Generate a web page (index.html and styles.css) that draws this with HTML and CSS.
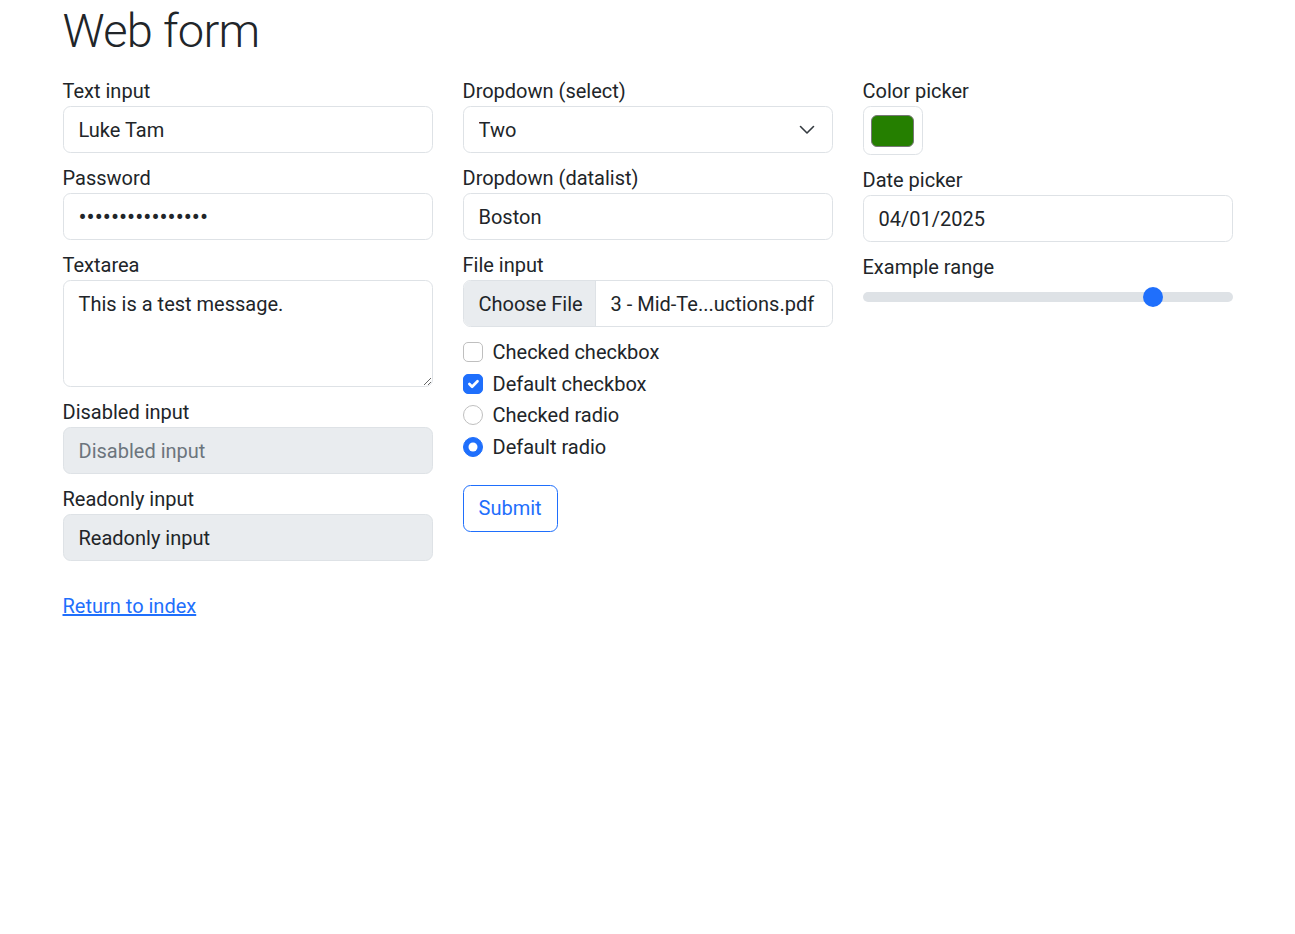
FILE: index.html
```html
<!DOCTYPE html>
<html lang="en">
<head>
<meta charset="utf-8">
<title>Web form</title>
<link rel="stylesheet" href="styles.css">
</head>
<body>
<div class="container">
  <h1 class="title">Web form</h1>
  <form class="form-grid" action="#" onsubmit="return false">
    <div class="col">
      <label class="field">Text input
        <input type="text" class="control" value="Luke Tam">
      </label>
      <label class="field">Password
        <input type="password" class="control password" value="aaaaaaaaaaaaaaaa" autocomplete="off">
      </label>
      <label class="field">Textarea
        <textarea class="control textarea" rows="3">This is a test message.</textarea>
      </label>
      <label class="field">Disabled input
        <input type="text" class="control" placeholder="Disabled input" disabled>
      </label>
      <label class="field">Readonly input
        <input type="text" class="control readonly" value="Readonly input" readonly>
      </label>
    </div>
    <div class="col">
      <label class="field">Dropdown (select)
        <select class="control select">
          <option>Open this select menu</option>
          <option>One</option>
          <option selected>Two</option>
          <option>Three</option>
        </select>
      </label>
      <label class="field">Dropdown (datalist)
        <input type="text" class="control" value="Boston">
      </label>
      <div class="field">
        <span class="field-label">File input</span>
        <div class="control file">
          <span class="file-btn">Choose File</span>
          <span class="file-name">3 - Mid-Te...uctions.pdf</span>
        </div>
      </div>
      <label class="check"><input type="checkbox" class="check-input"> Checked checkbox</label>
      <label class="check"><input type="checkbox" class="check-input" checked> Default checkbox</label>
      <label class="check"><input type="radio" name="r" class="check-input radio"> Checked radio</label>
      <label class="check"><input type="radio" name="r" class="check-input radio" checked> Default radio</label>
      <button type="submit" class="btn-outline">Submit</button>
    </div>
    <div class="col">
      <label class="field">Color picker
        <input type="color" class="control color" value="#257f00">
      </label>
      <label class="field">Date picker
        <input type="text" class="control" value="04/01/2025">
      </label>
      <label class="field">Example range
        <input type="range" class="range" min="0" max="10" step="1" value="8">
      </label>
    </div>
  </form>
  <div class="footer">
    <a href="#" class="link">Return to index</a>
  </div>
</div>
</body>
</html>
```
FILE: styles.css
```css
* { box-sizing: border-box; }

html, body {
  margin: 0;
  background: #fff;
}

body {
  font-family: Roboto, "Liberation Sans", sans-serif;
  font-size: 20px;
  line-height: 30px;
  color: #212529;
}

.container {
  width: 1200px;
  margin: 0 auto;
}

.title {
  margin: 0 0 7px;
  padding: 3px 15px 0;
  font-size: 47px;
  font-weight: 300;
  line-height: 56px;
  letter-spacing: -0.7px;
}

.form-grid {
  display: grid;
  grid-template-columns: repeat(3, 1fr);
  padding: 10px 0;
}

.col {
  padding: 0 15px;
  display: flex;
  flex-direction: column;
  align-items: flex-start;
}

.field {
  display: block;
  width: 100%;
  margin-bottom: 10px;
}

.field-label {
  display: block;
}

.control {
  display: block;
  width: 100%;
  height: 47px;
  padding: 7.5px 15px;
  font: inherit;
  line-height: 30px;
  color: #212529;
  background: #fff;
  border: 1px solid #dee2e6;
  border-radius: 7.5px;
  appearance: none;
  -webkit-appearance: none;
  outline: none;
}

.control.password {
  font-size: 24px;
}

.control::placeholder {
  color: #6c757d;
  opacity: 1;
}

.control:disabled,
.control.readonly {
  background: #e9ecef;
}

.control:disabled {
  color: #6c757d;
}

.textarea {
  height: 107px;
  resize: vertical;
}

.select {
  padding-right: 45px;
  background-image: url("data:image/svg+xml,%3csvg xmlns='http://www.w3.org/2000/svg' viewBox='0 0 16 16'%3e%3cpath fill='none' stroke='%23343a40' stroke-linecap='round' stroke-linejoin='round' stroke-width='1.6' d='M1.5 4.5l6.5 6.5 6.5-6.5'/%3e%3c/svg%3e");
  background-repeat: no-repeat;
  background-position: right 17px center;
  background-size: 16px 16px;
}

.file {
  display: flex;
  align-items: center;
  padding: 0;
  overflow: hidden;
}

.file-btn {
  flex: none;
  width: 132px;
  height: 100%;
  padding: 7.5px 15px;
  background: #e9ecef;
  border-right: 1px solid #dee2e6;
  white-space: nowrap;
}

.file-name {
  padding: 0 15px;
  white-space: nowrap;
}

.check {
  display: flex;
  align-items: flex-start;
  min-height: 30px;
  margin-bottom: 1.7px;
}

.check-input {
  appearance: none;
  -webkit-appearance: none;
  flex: none;
  width: 20px;
  height: 20px;
  margin: 5px 10px 0 0;
  border: 1px solid #bfbfbf;
  border-radius: 5px;
  background-color: #fff;
  background-repeat: no-repeat;
  background-position: center;
  background-size: contain;
}

.check-input.radio {
  border-radius: 50%;
}

.check-input:checked {
  background-color: #1f6ffc;
  border-color: #1f6ffc;
  background-image: url("data:image/svg+xml,%3csvg xmlns='http://www.w3.org/2000/svg' viewBox='0 0 20 20'%3e%3cpath fill='none' stroke='%23fff' stroke-linecap='round' stroke-linejoin='round' stroke-width='3' d='m6 10 3 3 6-6'/%3e%3c/svg%3e");
}

.check-input.radio:checked {
  background-image: url("data:image/svg+xml,%3csvg xmlns='http://www.w3.org/2000/svg' viewBox='-4 -4 8 8'%3e%3ccircle r='2' fill='%23fff'/%3e%3c/svg%3e");
}

.btn-outline {
  margin-top: 21px;
  height: 47px;
  padding: 7.5px 15px;
  font: inherit;
  line-height: 30px;
  color: #1f6ffc;
  background: #fff;
  border: 1px solid #1f6ffc;
  border-radius: 7.5px;
  cursor: pointer;
}

.color {
  width: 60px;
  height: 49px;
  padding: 7.5px;
}

.color::-webkit-color-swatch-wrapper {
  padding: 0;
}

.color::-webkit-color-swatch {
  border: 1px solid #777;
  border-radius: 6px;
}

.range {
  display: block;
  width: 100%;
  height: 30px;
  margin: 0;
  padding: 0;
  background: transparent;
  appearance: none;
  -webkit-appearance: none;
}

.range::-webkit-slider-runnable-track {
  height: 10px;
  background: #dee2e6;
  border-radius: 10px;
}

.range::-webkit-slider-thumb {
  -webkit-appearance: none;
  appearance: none;
  width: 20px;
  height: 20px;
  margin-top: -5px;
  border: 0;
  border-radius: 50%;
  background: #1f6ffc;
}

.footer {
  padding: 10px 15px;
}

.link {
  color: #1f6ffc;
  text-decoration: underline;
}
```
